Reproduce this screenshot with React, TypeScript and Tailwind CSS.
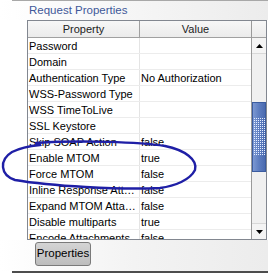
import React from "react";

const rows: [string, string][] = [
  ["Password", ""],
  ["Domain", ""],
  ["Authentication Type", "No Authorization"],
  ["WSS-Password Type", ""],
  ["WSS TimeToLive", ""],
  ["SSL Keystore", ""],
  ["Skip SOAP Action", "false"],
  ["Enable MTOM", "true"],
  ["Force MTOM", "false"],
  ["Inline Response Attachments", "false"],
  ["Expand MTOM Attachments", "false"],
  ["Disable multiparts", "true"],
  ["Encode Attachments", "false"],
];

export default function App() {
  return (
    <div className="relative w-[268px] h-[273px] overflow-hidden bg-white font-['Liberation_Sans',Arial,sans-serif] text-[11px] text-black">
      <div className="flex flex-col h-full">
        <div className="ml-[12px] h-[1px] bg-[#a8a8a8]" />
        <div className="h-[19px] pl-[29px] flex items-center bg-gradient-to-r from-white to-[#ececec] text-[#3f5899] text-[11.5px]">
          Request Properties
        </div>
        <div className="flex">
          <div className="w-[27px] bg-white" />
          <div className="w-[240px] h-[220px] border border-[#828790] flex bg-white overflow-hidden">
            <div className="flex-1 flex flex-col min-w-0">
              <div className="h-[17px] flex border-b border-[#a0a0a0] bg-gradient-to-b from-[#f7f7f7] to-[#ebebeb] text-[#222]">
                <div className="w-[112px] border-r border-[#a0a0a0] flex items-center justify-center">Property</div>
                <div className="flex-1 flex items-center justify-center">Value</div>
              </div>
              {rows.map(([k, v]) => (
                <div key={k} className="h-[16px] shrink-0 flex border-b border-[#ececec]">
                  <div className="w-[112px] shrink-0 border-r border-[#e4e4e4] pl-[1px] leading-[16px] truncate">{k}</div>
                  <div className="flex-1 pl-[1px] leading-[16px] truncate">{v}</div>
                </div>
              ))}
            </div>
            <div className="w-[15px] shrink-0 border-l border-[#9a9a9a] flex flex-col bg-[#f0f0f0]">
              <div className="h-[17px] border-b border-[#a0a0a0] bg-gradient-to-b from-[#f7f7f7] to-[#ebebeb]" />
              <div className="h-[16px] flex items-center justify-center border-b border-[#d8d8d8] bg-[#f4f4f4]">
                <svg width="7" height="4" viewBox="0 0 7 4"><path d="M3.5 0 L7 4 L0 4 Z" fill="#000" /></svg>
              </div>
              <div className="h-[48px]" />
              <div className="h-[70px] border border-[#3b5ca0] bg-gradient-to-r from-[#7c98d2] via-[#5d7dc0] to-[#4b6bb0] flex items-center justify-center">
                <svg width="11" height="38" viewBox="0 0 11 38">
                  <defs>
                    <pattern id="dots" width="2" height="2" patternUnits="userSpaceOnUse">
                      <rect x="0" y="0" width="1" height="1" fill="#e6eeff" />
                    </pattern>
                  </defs>
                  <rect x="0" y="0" width="11" height="38" fill="url(#dots)" />
                </svg>
              </div>
              <div className="flex-1" />
              <div className="h-[16px] flex items-center justify-center border-t border-[#d8d8d8] bg-[#f4f4f4]">
                <svg width="7" height="4" viewBox="0 0 7 4"><path d="M0 0 L7 0 L3.5 4 Z" fill="#000" /></svg>
              </div>
            </div>
          </div>
        </div>
        <div className="flex-1 flex bg-gradient-to-r from-white via-[#f3f3f3] to-[#ececec]">
          <div className="pl-[35px] pt-[2px]">
            <div className="w-[56px] h-[24px] rounded-[3px] border border-[#7a7a7a] bg-gradient-to-b from-[#d4d4d4] to-[#bdbdbd] flex items-center justify-center text-[11.5px]">
              Properties
            </div>
          </div>
        </div>
        <div className="ml-[12px] h-[2px] bg-[#4d4d4d]" />
      </div>
      <svg className="absolute left-0 top-0 pointer-events-none" width="268" height="273" viewBox="0 0 268 273">
        <path
          d="M36 143 C80 140 140 142 165 146 C185 150 198 160 195 170 C190 180 175 186 160 188 C120 190 50 186 15 180 C0 175 -1 160 12 152 C20 148 30 146 40 145"
          fill="none"
          stroke="#1f1fa6"
          strokeWidth="2.4"
          strokeLinecap="round"
        />
      </svg>
    </div>
  );
}
